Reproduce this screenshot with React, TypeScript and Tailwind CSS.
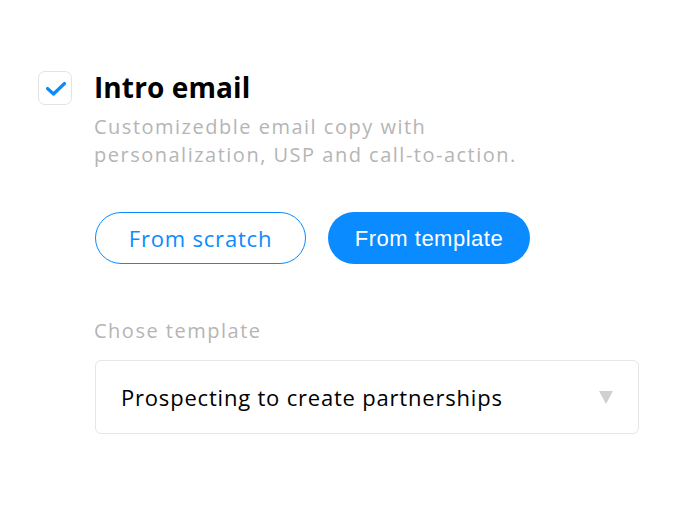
export default function App() {
  return (
    <div className="w-[692px] h-[520px] bg-white font-['Open_Sans',sans-serif]">
      <div className="flex gap-[23px] pl-[38px] pt-[71px]">
        {/* Checkbox */}
        <div className="w-[34px] h-[34px] shrink-0 rounded-[7px] border-[1.5px] border-[#e3e3e3] flex items-center justify-center">
          <svg width="22" height="16" viewBox="0 0 22 16" fill="none" className="mt-[2px] ml-[1px]">
            <path d="M2.5 7.5 L8.5 13 L19.5 2.5" stroke="#0a8bff" strokeWidth="3.2" strokeLinecap="round" strokeLinejoin="round" />
          </svg>
        </div>

        <div className="flex flex-col">
          <h1 className="-ml-[1px] text-[28px] leading-[30px] font-bold text-black tracking-[0.1px] mt-[1px]">Intro email</h1>
          <p className="-ml-[1px] mt-[11px] text-[20px] leading-[28px] text-[#b5b5b5] tracking-[1.5px] w-[450px]">
            Customizedble email copy with personalization, USP and call-to-action.
          </p>

          <div className="flex gap-[22px] mt-[43px]">
            <button className="w-[211px] h-[52px] rounded-full border-[1.5px] border-[#0a8bff] text-[#0a8bff] text-[22px] tracking-[0.8px]">
              From scratch
            </button>
            <button className="w-[202px] h-[52px] rounded-full bg-[#0a8bff] text-white text-[22px] tracking-[0.5px] font-['Liberation_Sans',sans-serif]">
              From template
            </button>
          </div>

          <div className="-ml-[1px] mt-[54px] text-[20px] leading-[26px] text-[#b5b5b5] tracking-[1.5px]">Chose template</div>

          <div className="mt-[16px] w-[544px] h-[74px] rounded-[6px] border-[1.5px] border-[#e6e6e6] flex items-center justify-between pl-[25px] pr-[25px]">
            <span className="text-[22px] text-black tracking-[0.8px]">Prospecting to create partnerships</span>
            <svg width="14" height="13" viewBox="0 0 14 13">
              <path d="M0 0 H14 L7 13 Z" fill="#d0d0d0" />
            </svg>
          </div>
        </div>
      </div>
    </div>
  );
}
